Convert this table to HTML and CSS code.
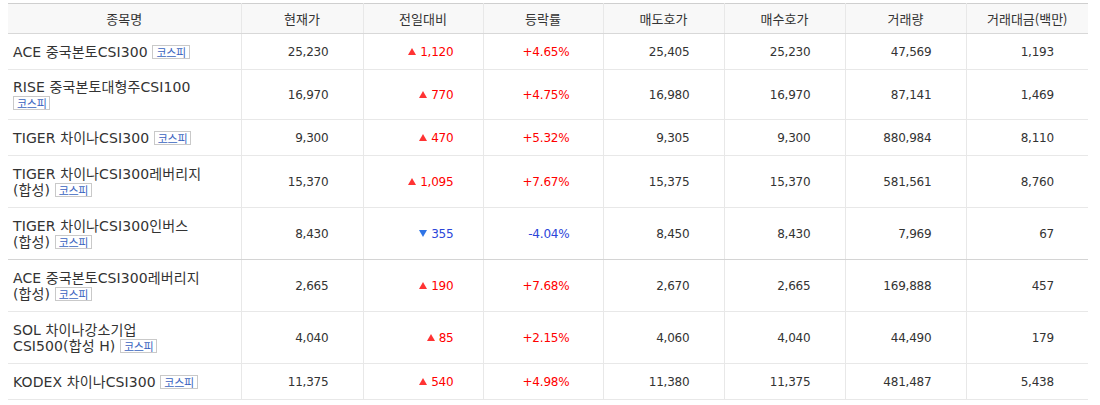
FILE: index.html
```html
<!DOCTYPE html>
<html lang="ko">
<head>
<meta charset="utf-8">
<link rel="stylesheet" href="styles.css">
</head>
<body>
<div class="wrap">
<table class="quote">
  <colgroup>
    <col class="c-name"><col class="c-122"><col class="c-120"><col class="c-120"><col class="c-121"><col class="c-121"><col class="c-121"><col class="c-122">
  </colgroup>
  <thead>
    <tr><th>종목명</th><th>현재가</th><th>전일대비</th><th>등락률</th><th>매도호가</th><th>매수호가</th><th>거래량</th><th>거래대금(백만)</th></tr>
  </thead>
  <tbody>
    <tr>
      <td class="name">ACE 중국본토CSI300 <span class="badge">코스피</span></td>
      <td class="num">25,230</td><td class="num chg up"><i class="tri-up"></i>1,120</td><td class="num rate up">+4.65%</td>
      <td class="num">25,405</td><td class="num">25,230</td><td class="num">47,569</td><td class="num">1,193</td>
    </tr>
    <tr class="tall2">
      <td class="name">RISE 중국본토대형주CSI100<br><span class="badge">코스피</span></td>
      <td class="num">16,970</td><td class="num chg up"><i class="tri-up"></i>770</td><td class="num rate up">+4.75%</td>
      <td class="num">16,980</td><td class="num">16,970</td><td class="num">87,141</td><td class="num">1,469</td>
    </tr>
    <tr>
      <td class="name">TIGER 차이나CSI300 <span class="badge">코스피</span></td>
      <td class="num">9,300</td><td class="num chg up"><i class="tri-up"></i>470</td><td class="num rate up">+5.32%</td>
      <td class="num">9,305</td><td class="num">9,300</td><td class="num">880,984</td><td class="num">8,110</td>
    </tr>
    <tr>
      <td class="name">TIGER 차이나CSI300레버리지<br>(합성) <span class="badge">코스피</span></td>
      <td class="num">15,370</td><td class="num chg up"><i class="tri-up"></i>1,095</td><td class="num rate up">+7.67%</td>
      <td class="num">15,375</td><td class="num">15,370</td><td class="num">581,561</td><td class="num">8,760</td>
    </tr>
    <tr class="group-end">
      <td class="name">TIGER 차이나CSI300인버스<br>(합성) <span class="badge">코스피</span></td>
      <td class="num">8,430</td><td class="num chg down"><i class="tri-down"></i>355</td><td class="num rate down">-4.04%</td>
      <td class="num">8,450</td><td class="num">8,430</td><td class="num">7,969</td><td class="num">67</td>
    </tr>
    <tr>
      <td class="name">ACE 중국본토CSI300레버리지<br>(합성) <span class="badge">코스피</span></td>
      <td class="num">2,665</td><td class="num chg up"><i class="tri-up"></i>190</td><td class="num rate up">+7.68%</td>
      <td class="num">2,670</td><td class="num">2,665</td><td class="num">169,888</td><td class="num">457</td>
    </tr>
    <tr>
      <td class="name">SOL 차이나강소기업<br>CSI500(합성 H) <span class="badge">코스피</span></td>
      <td class="num">4,040</td><td class="num chg up"><i class="tri-up"></i>85</td><td class="num rate up">+2.15%</td>
      <td class="num">4,060</td><td class="num">4,040</td><td class="num">44,490</td><td class="num">179</td>
    </tr>
    <tr>
      <td class="name">KODEX 차이나CSI300 <span class="badge">코스피</span></td>
      <td class="num">11,375</td><td class="num chg up"><i class="tri-up"></i>540</td><td class="num rate up">+4.98%</td>
      <td class="num">11,380</td><td class="num">11,375</td><td class="num">481,487</td><td class="num">5,438</td>
    </tr>
  </tbody>
</table>
</div>
</body>
</html>
```
FILE: styles.css
```css
html, body {
  margin: 0;
  padding: 0;
  background: #fff;
}
.wrap {
  padding: 3px 12px 0 8px;
}
.quote {
  width: 1080px;
  border-collapse: collapse;
  table-layout: fixed;
  font-family: "Noto Sans CJK KR", "Noto Sans", sans-serif;
  font-size: 13px;
  color: #333;
  border-top: 1px solid #cfcfcf;
}
.c-name { width: 233px; }
.c-122 { width: 122px; }
.c-120 { width: 120px; }
.c-121 { width: 121px; }

.quote th {
  background: #f8f8f8;
  font-weight: normal;
  height: 29px;
  padding: 0;
  line-height: 16px;
  text-align: center;
  border-bottom: 1px solid #d8d8d8;
  border-left: 1px solid #e8e8e8;
  color: #333;
}
.quote th:first-child,
.quote td:first-child { border-left: none; }

.quote td {
  border-bottom: 1px solid #e8e8e8;
  border-left: 1px solid #e8e8e8;
  padding: 10px 0 9px;
  line-height: 16px;
  height: 16px;
  vertical-align: middle;
}
.quote tr.group-end td { border-bottom-color: #d4d4d4; }

.quote td.name {
  padding-left: 5px;
  padding-right: 4px;
  text-align: left;
  font-family: "DejaVu Sans", "Noto Sans CJK KR", sans-serif;
  font-size: 14px;
  letter-spacing: 0.1px;
  color: #333;
}
.quote td.num {
  text-align: right;
  padding-right: 34px;
  font-family: "DejaVu Sans", "Noto Sans", sans-serif;
  font-size: 12px;
  letter-spacing: -0.2px;
}
.quote td.chg { padding-right: 29px; }
.quote td.rate { padding-right: 33px; }

.up { color: #f00; }
.down { color: #2b45d9; }

.tri-up, .tri-down {
  display: inline-block;
  width: 0;
  height: 0;
  border-left: 4px solid transparent;
  border-right: 4px solid transparent;
  margin-right: 4px;
  vertical-align: 1px;
}
.tri-up { border-bottom: 7px solid #f33; }
.tri-down { border-top: 7px solid #2f74e6; }

.badge {
  display: inline-block;
  font-family: "Noto Sans CJK KR", sans-serif;
  font-size: 11px;
  line-height: 12px;
  padding: 0 3px;
  border: 1px solid #c9c9c9;
  color: #3a64c0;
  background: #fff;
  vertical-align: 0;
  letter-spacing: -0.3px;
}
.tall2 td { padding-top: 9px; padding-bottom: 8px; }
```
